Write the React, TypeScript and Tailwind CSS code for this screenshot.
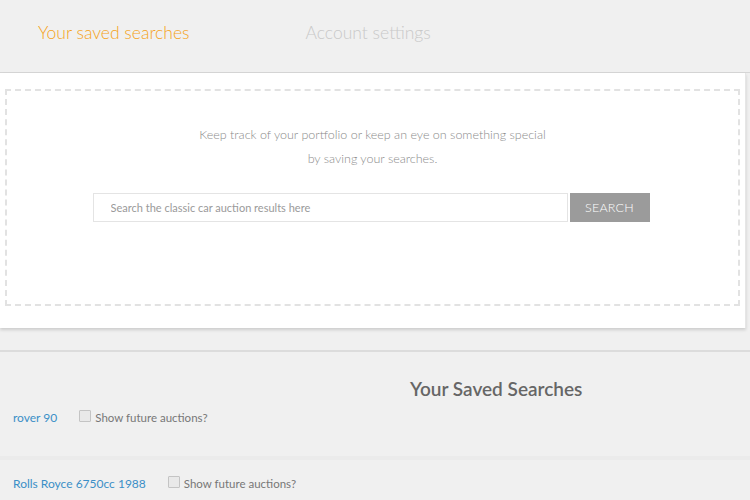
import * as React from "react";

const font = { fontFamily: "Lato, 'Open Sans', sans-serif" };

const SavedRow: React.FC<{ label: string; first?: boolean }> = ({ label, first }) => (
  <div
    className={
      "flex items-center pl-[13px] leading-[16px] " +
      (first ? "pt-[9px] h-[59px] border-b-[4px] border-[#ebebeb] items-start" : "pt-[16px]")
    }
  >
    <a className="text-[12px] text-[#3b8fc7] mr-[22px]" href="#">
      {label}
    </a>
    <label className="flex items-center text-[11.5px] text-[#777]">
      <span className="w-[12px] h-[12px] border border-[#c4c4c4] bg-[#e9e9e9] mr-[4px] -mt-[4px] rounded-[1px]" />
      Show future auctions?
    </label>
  </div>
);

export default function App() {
  const [query, setQuery] = React.useState("");

  return (
    <div className="w-[750px] h-[500px] overflow-hidden bg-[#f0f0f0]" style={font}>
      {/* Tabs */}
      <div className="h-[73px] flex items-start pt-[21px] border-b border-[#d6d6d6] leading-[24px]">
        <button className="ml-[38px] text-[17.5px] font-light text-[#f5a31a]">
          Your saved searches
        </button>
        <button className="ml-[116px] text-[17.5px] font-light text-[#c9c9c9]">
          Account settings
        </button>
      </div>

      {/* Search panel */}
      <div className="bg-white w-[746px] h-[255px] pt-[16px] pl-[5px] border-r border-[#e6e6e6] shadow-[0_2px_3px_rgba(0,0,0,0.15)]">
        <div className="w-[735px] h-[217px] border-2 border-dashed border-[#e2e2e2] flex flex-col items-center leading-[18px]">
          <p className="mt-[35px] text-[12.5px] font-light text-[#8a8a8a]">
            Keep track of your portfolio or keep an eye on something special
          </p>
          <p className="mt-[6px] text-[12.5px] font-light text-[#8a8a8a]">
            by saving your searches.
          </p>
          <div className="flex mt-[25px] -ml-[3px]">
            <input
              value={query}
              onChange={(e) => setQuery(e.target.value)}
              placeholder="Search the classic car auction results here"
              className="w-[475px] h-[29px] border border-[#e4e4e4] pl-[17px] text-[11px] text-[#666] placeholder:text-[#9a9a9a] outline-none"
            />
            <button className="ml-[2px] w-[80px] h-[29px] bg-[#9b9b9b] text-white text-[12.5px] font-light tracking-[0.2px]">
              SEARCH
            </button>
          </div>
        </div>
      </div>

      {/* Saved searches */}
      <div className="mt-[22px] border-t-2 border-[#dcdcdc]">
        <h2 className="pl-[410px] pt-[25px] text-[19px] leading-[24px] font-semibold text-[#666]">
          Your Saved Searches
        </h2>
        <SavedRow label="rover 90" first />
        <SavedRow label="Rolls Royce 6750cc 1988" />
      </div>
    </div>
  );
}
